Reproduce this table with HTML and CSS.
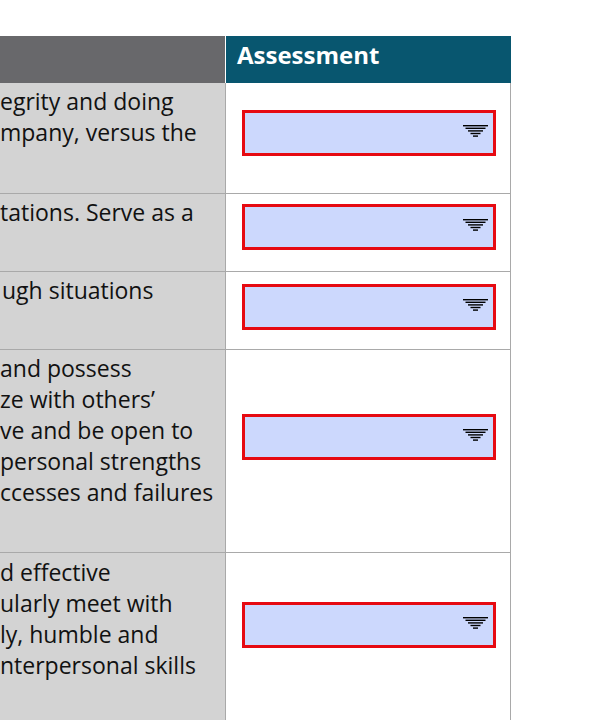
FILE: index.html
```
<!DOCTYPE html>
<html lang="en">
<head>
<meta charset="utf-8">
<title>Assessment</title>
<link rel="stylesheet" href="styles.css">
</head>
<body>
<div class="sheet">
  <div class="row head">
    <div class="c1"></div>
    <div class="c2">Assessment</div>
  </div>

  <div class="row r1">
    <div class="c1">
      <div class="ln">egrity and doing</div>
      <div class="ln">mpany, versus the</div>
    </div>
    <div class="c2">
      <div class="dd"><svg class="arrow" width="25" height="12" viewBox="0 0 25 12"><rect x="0" y="0" width="25" height="1.4"/><rect x="2.5" y="2.6" width="20" height="1.4"/><rect x="5" y="5.2" width="15" height="1.4"/><rect x="7.5" y="7.8" width="10" height="1.4"/><rect x="10" y="10.4" width="5" height="1.4"/></svg></div>
    </div>
  </div>

  <div class="row r2">
    <div class="c1">
      <div class="ln">tations. Serve as a</div>
    </div>
    <div class="c2">
      <div class="dd"><svg class="arrow" width="25" height="12" viewBox="0 0 25 12"><rect x="0" y="0" width="25" height="1.4"/><rect x="2.5" y="2.6" width="20" height="1.4"/><rect x="5" y="5.2" width="15" height="1.4"/><rect x="7.5" y="7.8" width="10" height="1.4"/><rect x="10" y="10.4" width="5" height="1.4"/></svg></div>
    </div>
  </div>

  <div class="row r3">
    <div class="c1">
      <div class="ln ind">ugh situations</div>
    </div>
    <div class="c2">
      <div class="dd"><svg class="arrow" width="25" height="12" viewBox="0 0 25 12"><rect x="0" y="0" width="25" height="1.4"/><rect x="2.5" y="2.6" width="20" height="1.4"/><rect x="5" y="5.2" width="15" height="1.4"/><rect x="7.5" y="7.8" width="10" height="1.4"/><rect x="10" y="10.4" width="5" height="1.4"/></svg></div>
    </div>
  </div>

  <div class="row r4">
    <div class="c1">
      <div class="ln">and possess</div>
      <div class="ln">ze with others’</div>
      <div class="ln">ve and be open to</div>
      <div class="ln">personal strengths</div>
      <div class="ln">ccesses and failures</div>
    </div>
    <div class="c2">
      <div class="dd"><svg class="arrow" width="25" height="12" viewBox="0 0 25 12"><rect x="0" y="0" width="25" height="1.4"/><rect x="2.5" y="2.6" width="20" height="1.4"/><rect x="5" y="5.2" width="15" height="1.4"/><rect x="7.5" y="7.8" width="10" height="1.4"/><rect x="10" y="10.4" width="5" height="1.4"/></svg></div>
    </div>
  </div>

  <div class="row r5">
    <div class="c1">
      <div class="ln">d effective</div>
      <div class="ln">ularly meet with</div>
      <div class="ln">ly, humble and</div>
      <div class="ln">nterpersonal skills</div>
    </div>
    <div class="c2">
      <div class="dd"><svg class="arrow" width="25" height="12" viewBox="0 0 25 12"><rect x="0" y="0" width="25" height="1.4"/><rect x="2.5" y="2.6" width="20" height="1.4"/><rect x="5" y="5.2" width="15" height="1.4"/><rect x="7.5" y="7.8" width="10" height="1.4"/><rect x="10" y="10.4" width="5" height="1.4"/></svg></div>
    </div>
  </div>
</div>
</body>
</html>
```
FILE: styles.css
```
html, body {
  margin: 0;
  padding: 0;
  background: #ffffff;
  overflow: hidden;
}

.sheet {
  margin-top: 36px;
  width: 511px;
  font-family: "Open Sans", "Noto Sans", sans-serif;
  color: #111111;
}

.row {
  display: grid;
  grid-template-columns: 226px 285px;
  border-bottom: 1px solid #a9a9a9;
}

.row .c1 {
  background: #d3d3d3;
  border-right: 1px solid #a9a9a9;
  overflow: hidden;
}

.row .c2 {
  background: #ffffff;
  border-right: 1px solid #a9a9a9;
}

.head {
  height: 47px;
  border-bottom: none;
}

.head .c1 {
  background: #68686b;
  border-right: 1px solid #ffffff;
}

.head .c2 {
  background: #08566f;
  border-right: none;
  color: #ffffff;
  font-weight: 700;
  font-size: 24px;
  line-height: 32px;
  padding: 3px 0 0 11px;
}

.ln {
  font-size: 23px;
  font-weight: 500;
  line-height: 31px;
  white-space: nowrap;
}

.ind { padding-left: 2px; }

.r1 { height: 110px; }
.r2 { height: 77px; }
.r3 { height: 77px; }
.r4 { height: 202px; }
.r5 { height: 200px; border-bottom: none; }

.r1 .c1 { padding-top: 3px; }
.r2 .c1 { padding-top: 3px; }
.r3 .c1 { padding-top: 3px; }
.r4 .c1 { padding-top: 3px; }
.r5 .c1 { padding-top: 4px; }

.dd {
  box-sizing: border-box;
  width: 254px;
  height: 46px;
  margin-left: 16px;
  border: 3px solid #e60a12;
  background: #ccd8fd;
  display: flex;
  justify-content: flex-end;
  align-items: flex-start;
  padding: 12px 5px 0 0;
}

.r1 .dd { margin-top: 27px; }
.r2 .dd { margin-top: 10px; }
.r3 .dd { margin-top: 12px; }
.r4 .dd { margin-top: 64px; }
.r5 .dd { margin-top: 49px; }

.arrow {
  display: block;
  fill: #000000;
}
```
